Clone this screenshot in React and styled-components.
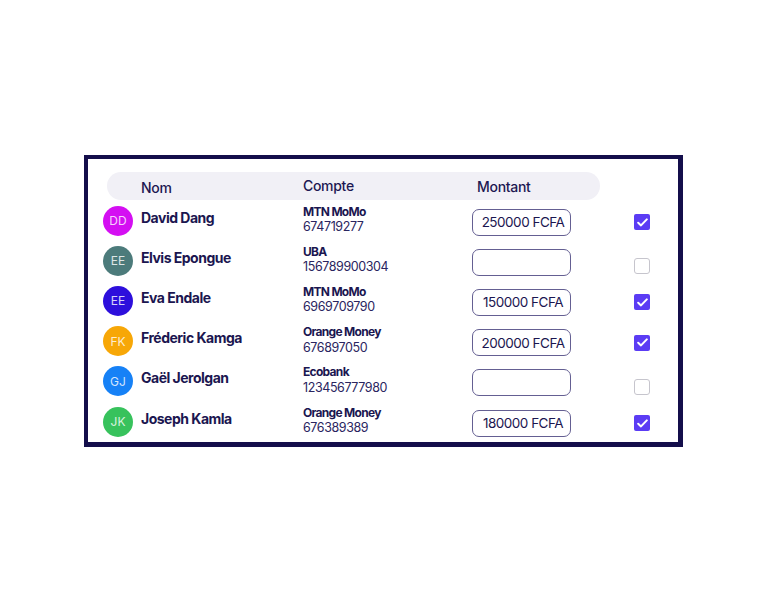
import React from 'react'
import styled, { createGlobalStyle } from 'styled-components'

const GlobalStyle = createGlobalStyle`
  body {
    margin: 0;
    background: #ffffff;
    font-family: Inter, "Open Sans", sans-serif;
    color: #1b1650;
  }
`

const Page = styled.div`
  padding: 155px 0 0 84px;
`

const Frame = styled.div`
  box-sizing: border-box;
  width: 599px;
  height: 292px;
  border: 4px solid #140e4b;
  border-right-width: 5px;
  border-bottom-width: 5px;
  padding-top: 13px;
  background: #fff;
`

const Header = styled.div`
  display: grid;
  grid-template-columns: 162px 174px 1fr;
  align-items: center;
  height: 28px;
  margin: 0 78px 0 19px;
  padding-left: 34px;
  border-radius: 14px;
  background: #f1f0f6;
  font-size: 14px;
  font-weight: 500;
  letter-spacing: -0.3px;
  color: #1d1852;
`

const HeadCell = styled.span`
  transform: translateY(${p => p.$dy || 0}px);
`

const Rows = styled.div`
  margin-top: 2px;
`

const Row = styled.div`
  display: grid;
  grid-template-columns: 38px 162px 169px 162px 16px;
  align-items: center;
  height: 40.2px;
  padding-left: 15px;
`

const Avatar = styled.div`
  width: 30px;
  height: 30px;
  border-radius: 50%;
  background: ${p => p.$color};
  color: rgba(255, 255, 255, 0.82);
  font-size: 12px;
  font-weight: 400;
  display: flex;
  align-items: center;
  justify-content: center;
  margin-top: -3px;
`

const Name = styled.div`
  font-weight: 700;
  font-size: 14px;
  letter-spacing: -0.5px;
  color: #1b1650;
  padding-bottom: 10px;
`

const Account = styled.div`
  display: flex;
  flex-direction: column;
  line-height: 15.5px;
  padding-bottom: 6px;
`

const Bank = styled.span`
  font-weight: 700;
  font-size: 12px;
  letter-spacing: -0.7px;
  color: #1b1650;
`

const Number = styled.span`
  font-size: 12.5px;
  letter-spacing: -0.4px;
  color: #2a2560;
`

const Amount = styled.div`
  width: 99px;
  height: 27px;
  box-sizing: border-box;
  border: 1.3px solid #645f92;
  border-radius: 7px;
  display: flex;
  align-items: center;
  justify-content: center;
  padding-left: 3px;
  font-size: 13.5px;
  letter-spacing: -0.5px;
  color: #1b1650;
`

const Check = styled.div`
  width: 16px;
  height: 16px;
  box-sizing: border-box;
  display: flex;
  align-items: center;
  justify-content: center;
  background: ${p => (p.$on ? '#5b3cf4' : '#fff')};
  border: ${p => (p.$on ? 'none' : '1.5px solid #c6c5cd')};
  border-radius: ${p => (p.$on ? '2px' : '3px')};
  margin-top: ${p => (p.$on ? '0' : '8px')};
`

const people = [
  { init: 'DD', color: '#d40ff2', name: 'David Dang', bank: 'MTN MoMo', num: '674719277', amount: '250000 FCFA', on: true },
  { init: 'EE', color: '#4c7b7b', name: 'Elvis Epongue', bank: 'UBA', num: '156789900304', amount: '', on: false },
  { init: 'EE', color: '#2d0fdc', name: 'Eva Endale', bank: 'MTN MoMo', num: '6969709790', amount: '150000 FCFA', on: true },
  { init: 'FK', color: '#f7a707', name: 'Fréderic Kamga', bank: 'Orange Money', num: '676897050', amount: '200000 FCFA', on: true },
  { init: 'GJ', color: '#1681f6', name: 'Gaël Jerolgan', bank: 'Ecobank', num: '123456777980', amount: '', on: false },
  { init: 'JK', color: '#37c25c', name: 'Joseph Kamla', bank: 'Orange Money', num: '676389389', amount: '180000 FCFA', on: true },
]

const App = () => {
  return (
    <Page>
      <GlobalStyle />
      <Frame>
        <Header>
          <HeadCell $dy={1}>Nom</HeadCell>
          <HeadCell $dy={-1}>Compte</HeadCell>
          <HeadCell>Montant</HeadCell>
        </Header>
        <Rows>
          {people.map((p, i) => (
            <Row key={i}>
              <Avatar $color={p.color}>{p.init}</Avatar>
              <Name>{p.name}</Name>
              <Account>
                <Bank>{p.bank}</Bank>
                <Number>{p.num}</Number>
              </Account>
              <Amount>{p.amount}</Amount>
              <Check $on={p.on}>
                {p.on && (
                  <svg width="11" height="9" viewBox="0 0 11 9">
                    <path d="M1.2 4.8 L4 7.4 L9.8 1.4" fill="none" stroke="#fff" strokeWidth="2" strokeLinecap="round" strokeLinejoin="round" />
                  </svg>
                )}
              </Check>
            </Row>
          ))}
        </Rows>
      </Frame>
    </Page>
  )
}

export default App
